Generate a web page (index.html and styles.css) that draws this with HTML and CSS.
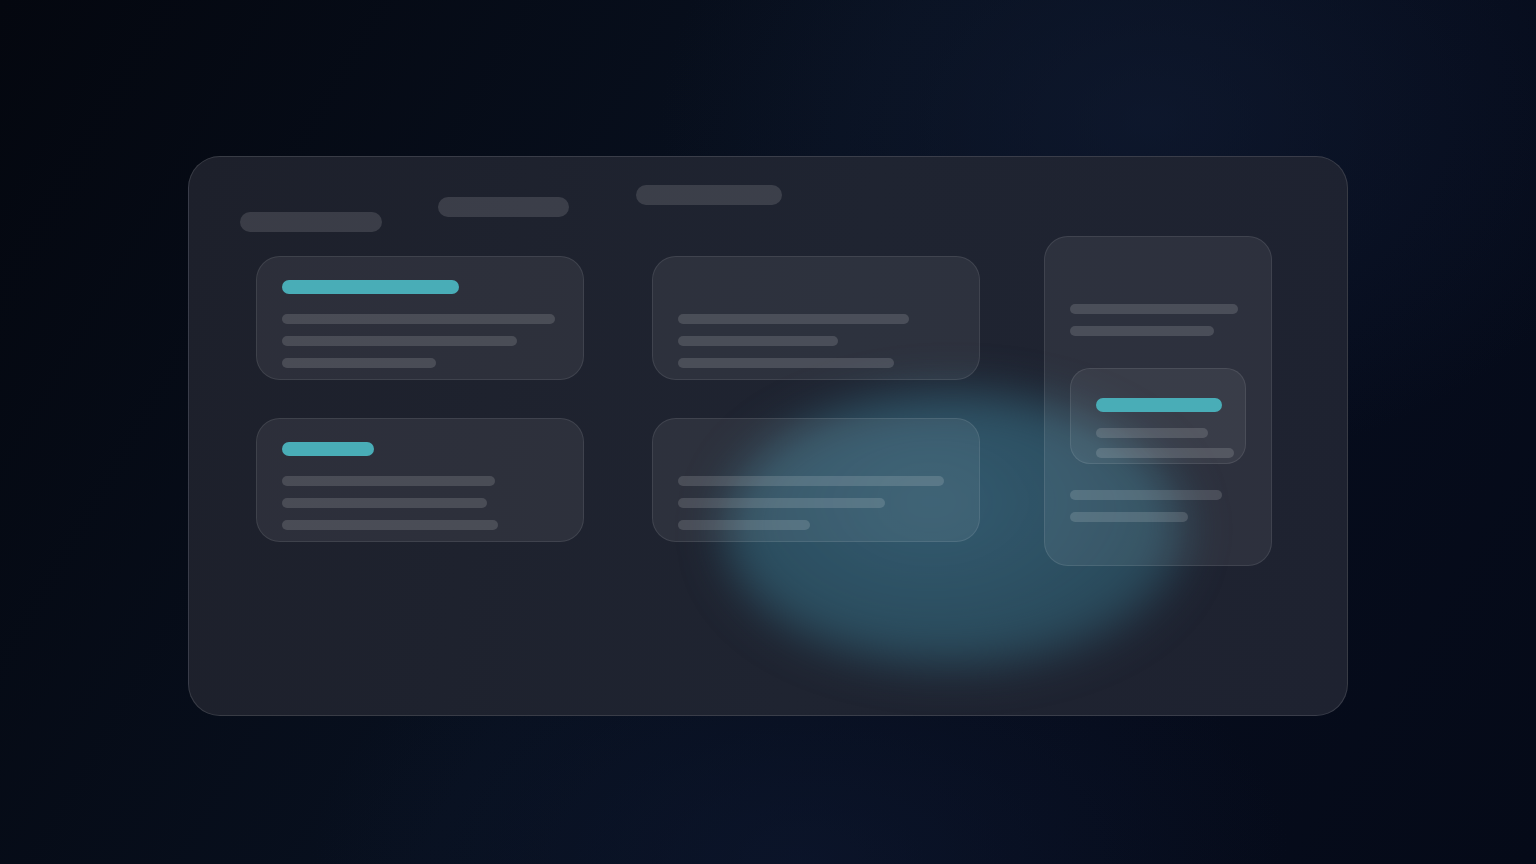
FILE: index.html
```html
<!DOCTYPE html>
<html>
<head>
<meta charset="utf-8">
<link rel="stylesheet" href="styles.css">
</head>
<body>
<div class="stage">
  <div class="panel">
    <div class="glow"></div>
    <div class="header">
      <div class="pill p1"></div>
      <div class="pill p2"></div>
      <div class="pill p3"></div>
    </div>
    <div class="body">
      <div class="grid">
        <div class="card">
          <div class="accent" style="width:177px"></div>
          <div class="lines">
            <div class="line" style="width:273px"></div>
            <div class="line" style="width:235px"></div>
            <div class="line" style="width:154px"></div>
          </div>
        </div>
        <div class="card">
          <div class="accent hidden" style="width:177px"></div>
          <div class="lines">
            <div class="line" style="width:231px"></div>
            <div class="line" style="width:160px"></div>
            <div class="line" style="width:216px"></div>
          </div>
        </div>
        <div class="card">
          <div class="accent" style="width:92px"></div>
          <div class="lines">
            <div class="line" style="width:213px"></div>
            <div class="line" style="width:205px"></div>
            <div class="line" style="width:216px"></div>
          </div>
        </div>
        <div class="card">
          <div class="accent hidden" style="width:92px"></div>
          <div class="lines">
            <div class="line" style="width:266px"></div>
            <div class="line" style="width:207px"></div>
            <div class="line" style="width:132px"></div>
          </div>
        </div>
      </div>
      <div class="side">
        <div class="side-lines">
          <div class="line" style="width:168px"></div>
          <div class="line" style="width:144px"></div>
        </div>
        <div class="inner">
          <div class="accent" style="width:126px"></div>
          <div class="inner-lines">
            <div class="line" style="width:112px"></div>
            <div class="line" style="width:138px"></div>
          </div>
        </div>
        <div class="side-lines bottom">
          <div class="line" style="width:152px"></div>
          <div class="line" style="width:118px"></div>
        </div>
      </div>
    </div>
  </div>
</div>
</body>
</html>
```

FILE: styles.css
```css
html, body {
  margin: 0;
  padding: 0;
  width: 1536px;
  height: 864px;
  overflow: hidden;
  font-family: "Inter", "Liberation Sans", sans-serif;
}
body {
  background:
    radial-gradient(ellipse 700px 500px at 1150px 120px, rgba(20, 32, 58, 0.5), transparent 70%),
    radial-gradient(ellipse 700px 400px at 800px 860px, rgba(16, 28, 56, 0.45), transparent 70%),
    linear-gradient(120deg, #04070f 0%, #08101f 45%, #060c1c 75%, #050a18 100%);
}
.stage {
  padding: 156px 0 0 188px;
}
.panel {
  position: relative;
  box-sizing: border-box;
  width: 1160px;
  height: 560px;
  border-radius: 32px;
  background: linear-gradient(100deg, #1d202b 0%, #1f2431 55%, #1e2230 100%);
  border: 1px solid rgba(255, 255, 255, 0.12);
  padding: 28px 0 0 51px;
  overflow: hidden;
}
.glow {
  position: absolute;
  left: 535px;
  top: 235px;
  width: 460px;
  height: 275px;
  border-radius: 50%;
  background: radial-gradient(ellipse at 45% 40%, rgba(60, 112, 136, 0.72), rgba(50, 102, 122, 0.62) 60%, rgba(48, 96, 116, 0.4) 85%, rgba(48, 96, 116, 0) 100%);
  filter: blur(22px);
  z-index: 0;
}
.header {
  position: relative;
  z-index: 1;
  display: flex;
  align-items: flex-start;
  gap: 56px;
  height: 47px;
}
.pill {
  height: 20px;
  border-radius: 10px;
  background: rgba(255, 255, 255, 0.13);
}
.p1 { width: 142px; margin-top: 27px; }
.p2 { width: 131px; margin-top: 12px; }
.p3 { width: 146px; margin-left: 11px; }
.body {
  position: relative;
  z-index: 1;
  display: flex;
  align-items: flex-start;
  margin-top: 4px;
  margin-left: 16px;
}
.grid {
  display: grid;
  grid-template-columns: 328px 328px;
  column-gap: 68px;
  row-gap: 38px;
  margin-top: 20px;
}
.card {
  box-sizing: border-box;
  height: 124px;
  border-radius: 24px;
  background: rgba(255, 255, 255, 0.065);
  border: 1px solid rgba(255, 255, 255, 0.09);
  padding: 23px 25px 0;
}
.accent {
  height: 14px;
  border-radius: 7px;
  background: #49adb7;
}
.accent.hidden { visibility: hidden; }
.lines {
  display: flex;
  flex-direction: column;
  gap: 12px;
  margin-top: 20px;
}
.line {
  height: 10px;
  border-radius: 5px;
  background: rgba(255, 255, 255, 0.14);
}
.side {
  box-sizing: border-box;
  width: 228px;
  height: 330px;
  margin-left: 64px;
  border-radius: 24px;
  background: rgba(255, 255, 255, 0.065);
  border: 1px solid rgba(255, 255, 255, 0.09);
  padding: 67px 25px 0;
}
.side-lines {
  display: flex;
  flex-direction: column;
  gap: 12px;
}
.side-lines.bottom { margin-top: 26px; }
.inner {
  box-sizing: border-box;
  width: 176px;
  height: 96px;
  margin-top: 32px;
  border-radius: 20px;
  background: rgba(255, 255, 255, 0.06);
  border: 1px solid rgba(255, 255, 255, 0.09);
  padding: 29px 0 0 25px;
}
.inner-lines {
  display: flex;
  flex-direction: column;
  gap: 10px;
  margin-top: 16px;
}
```
